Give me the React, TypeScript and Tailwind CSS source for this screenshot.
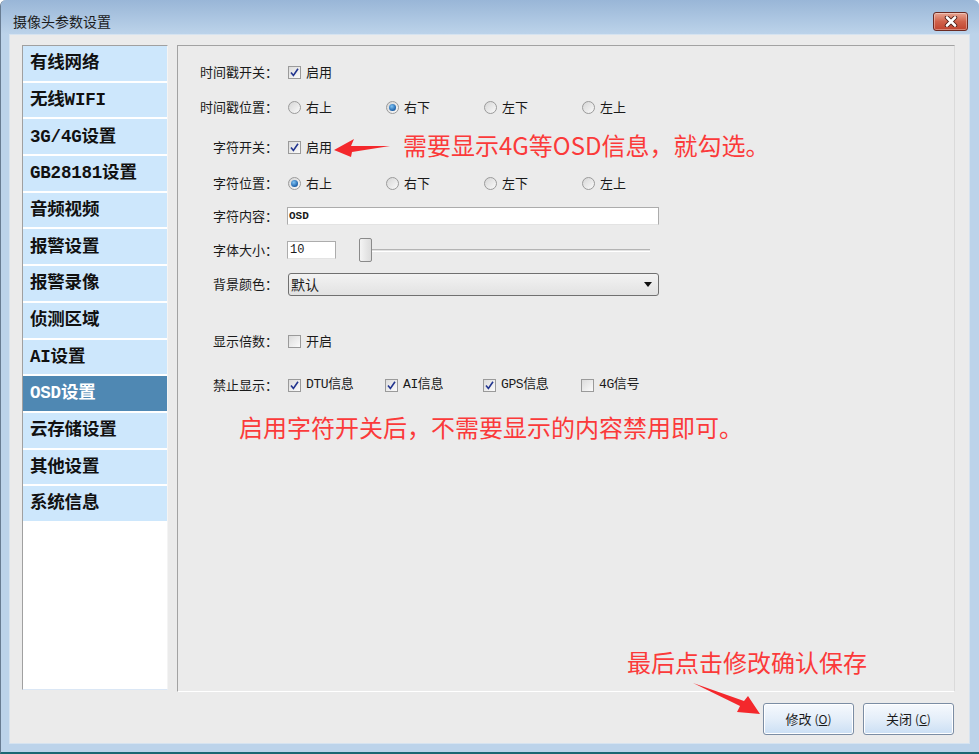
import React from "react";

const NAV = [
  "有线网络",
  "无线WIFI",
  "3G/4G设置",
  "GB28181设置",
  "音频视频",
  "报警设置",
  "报警录像",
  "侦测区域",
  "AI设置",
  "OSD设置",
  "云存储设置",
  "其他设置",
  "系统信息",
];

const POSITIONS = ["右上", "右下", "左下", "左上"];

function Check({ checked, label, mono }: { checked: boolean; label: string; mono?: boolean }) {
  return (
    <div className="flex items-center gap-[5px]">
      <span className="w-[13px] h-[13px] border border-[#9a9a9a] bg-gradient-to-br from-[#dcdcdc] to-[#fbfbfb] flex items-center justify-center">
        {checked && (
          <svg width="9" height="9" viewBox="0 0 9 9">
            <path d="M1 4.5 L3.4 7.5 L8 0.8" fill="none" stroke="#22358f" strokeWidth="1.6" />
          </svg>
        )}
      </span>
      <span
        className={
          mono
            ? "text-[13px] font-['Liberation_Mono','Noto_Sans_CJK_SC',monospace] tracking-[-0.4px]"
            : "text-[13px]"
        }
      >
        {label}
      </span>
    </div>
  );
}

function Radio({ checked, label }: { checked: boolean; label: string }) {
  return (
    <div className="w-[98px] flex items-center gap-[5px]">
      <span className="w-[13px] h-[13px] rounded-full border border-[#9a9a9a] bg-gradient-to-br from-[#d6d6d6] to-[#fafafa] flex items-center justify-center">
        {checked && (
          <span className="w-[7px] h-[7px] rounded-full bg-[radial-gradient(circle_at_40%_35%,#7fc4f5,#1b5fa8_70%,#153b6b)]" />
        )}
      </span>
      <span className="text-[13px]">{label}</span>
    </div>
  );
}

function Row({ label, h, children }: { label: string; h: string; children: React.ReactNode }) {
  return (
    <div className={`flex items-center ${h}`}>
      <div className="w-[100px] text-right text-[13px] text-[#1a1a1a]">{label}</div>
      <div className="ml-[10px] flex items-center">{children}</div>
    </div>
  );
}

function Button({ text, hot }: { text: string; hot: string }) {
  return (
    <button className="w-[91px] h-[32px] rounded-[3px] border border-[#7b8da4] bg-gradient-to-b from-[#f6f9fd] via-[#e4eef9] to-[#cbdff4] text-[13px] text-[#1a1a1a] shadow-[inset_0_0_0_1px_#ffffff]">
      {text}
      <span className="ml-[3px] text-[12px]">
        (<span className="underline">{hot}</span>)
      </span>
    </button>
  );
}

export default function App() {
  return (
    <div className="relative w-[979px] h-[754px] overflow-hidden flex flex-col bg-[#bcd3ea] border-l border-l-[#687c92] border-b-2 border-b-[#1b6773] rounded-t-[6px] font-['Noto_Sans_CJK_SC',sans-serif] text-[#1a1a1a]">
      {/* title bar */}
      <div className="h-[34px] shrink-0 flex items-center justify-between pt-[8px] pl-[12px] pr-[11px] bg-gradient-to-b from-[#99b6d7] to-[#bcd3ea]">
        <span className="text-[14px] text-[#1c1c1c]">摄像头参数设置</span>
        <div className="w-[35px] h-[19px] rounded-[3px] border border-[#6b2a22] bg-gradient-to-b from-[#e7a593] via-[#d0624b] to-[#c0432e] flex items-center justify-center shadow-[inset_0_0_0_1px_rgba(255,255,255,0.35)]">
          <svg width="14" height="11" viewBox="0 0 14 11">
            <path d="M3 1.5 L11 9.5 M11 1.5 L3 9.5" stroke="#4a1a14" strokeWidth="4.4" strokeLinecap="round" />
            <path d="M3 1.5 L11 9.5 M11 1.5 L3 9.5" stroke="#ffffff" strokeWidth="2.6" strokeLinecap="round" />
          </svg>
        </div>
      </div>

      {/* client area */}
      <div className="ml-[8px] mr-[9px] mb-[8px] flex-1 bg-[#ebebeb] border border-[#d6e3f0] flex flex-col pt-[10px] pl-[12px]">
        <div className="flex gap-[9px]">
          {/* nav list */}
          <div className="w-[146px] h-[645px] border border-[#a0a0a0] border-r-[#f4f4f4] border-b-[#dbe7f5] bg-white flex flex-col">
            {NAV.map((n) => (
              <div
                key={n}
                className={`h-[36.7px] shrink-0 border-b-2 border-white flex items-center pl-[7px] text-[17.5px] font-bold font-['Liberation_Mono','Noto_Sans_CJK_SC',monospace] tracking-[-0.2px] ${
                  n === "OSD设置" ? "bg-[#4f88b3] text-white" : "bg-[#cde7fc] text-[#111]"
                }`}
              >
                {n}
              </div>
            ))}
          </div>

          {/* settings panel */}
          <div className="w-[778px] h-[647px] border border-[#a2a2a2] border-r-[#dadada] border-b-white flex flex-col pt-[8px]">
            <Row label="时间戳开关：" h="h-[36px]">
              <Check checked label="启用" />
            </Row>
            <Row label="时间戳位置：" h="h-[34px]">
              {POSITIONS.map((p, i) => (
                <Radio key={p} checked={i === 1} label={p} />
              ))}
            </Row>
            <Row label="字符开关：" h="h-[46px]">
              <Check checked label="启用" />
              <svg width="56" height="20" viewBox="0 0 56 20" className="ml-[2px] mt-[2px]">
                <polygon points="0,12 20,1 17,8 56,8 18,14 17,19" fill="#f4282c" />
              </svg>
              <span className="ml-[13px] -mt-[4px] text-[24px] leading-[30px] text-[#fb3a3a] whitespace-nowrap">
                需要显示4G等OSD信息，就勾选。
              </span>
            </Row>
            <Row label="字符位置：" h="h-[26px]">
              {POSITIONS.map((p, i) => (
                <Radio key={p} checked={i === 0} label={p} />
              ))}
            </Row>
            <Row label="字符内容：" h="h-[40px]">
              <div className="-ml-[1px] w-[372px] h-[18px] bg-white border border-[#acacac] border-b-[#e3e3e3] flex items-center pl-[1px] text-[11px] font-['Liberation_Mono',monospace] font-bold">
                OSD
              </div>
            </Row>
            <Row label="字体大小：" h="h-[28px]">
              <div className="-ml-[1px] w-[49px] h-[18px] bg-white border border-[#acacac] border-b-[#e3e3e3] flex items-center pl-[2px] text-[12px] font-['Liberation_Mono',monospace]">
                10
              </div>
              <div className="relative ml-[23px] w-[291px] h-[24px] flex items-center">
                <div className="w-full h-[3px] border-t border-[#b4b4b4] border-b border-b-white bg-[#e2e2e2]" />
                <div className="absolute left-0 top-0 w-[13px] h-[24px] rounded-[2px] border border-[#8a8a8a] bg-gradient-to-r from-[#f4f4f4] to-[#dcdcdc]" />
              </div>
            </Row>
            <Row label="背景颜色：" h="h-[40px]">
              <div className="w-[371px] h-[23px] rounded-[3px] border border-[#707070] bg-gradient-to-b from-[#f3f3f3] to-[#e2e2e2] flex items-center justify-between pl-[2px] pr-[6px]">
                <span className="text-[14px] leading-none">默认</span>
                <svg width="8" height="5" viewBox="0 0 8 5">
                  <polygon points="0,0 8,0 4,5" fill="#111" />
                </svg>
              </div>
            </Row>
            <Row label="显示倍数：" h="h-[74px]">
              <Check checked={false} label="开启" />
            </Row>
            <Row label="禁止显示：" h="h-[14px]">
              <div className="w-[97px]">
                <Check checked mono label="DTU信息" />
              </div>
              <div className="w-[98px]">
                <Check checked mono label="AI信息" />
              </div>
              <div className="w-[98px]">
                <Check checked mono label="GPS信息" />
              </div>
              <Check checked={false} mono label="4G信号" />
            </Row>
            <div className="mt-[19px] pl-[61px] text-[24px] leading-[32px] text-[#fb3a3a] whitespace-nowrap">
              启用字符开关后，不需要显示的内容禁用即可。
            </div>
          </div>
        </div>

        {/* buttons */}
        <div className="mt-[11px] flex justify-end gap-[9px] pr-[15px]">
          <Button text="修改" hot="O" />
          <Button text="关闭" hot="C" />
        </div>
      </div>

      {/* annotation overlay */}
      <div className="absolute left-[626px] top-[646px] text-[24px] leading-[32px] text-[#fb3a3a] whitespace-nowrap">
        最后点击修改确认保存
      </div>
      <svg width="76" height="40" viewBox="0 0 76 40" className="absolute left-[688px] top-[678px]">
        <polygon points="4,5 55,23 59,18 71,36 48,34 51,28" fill="#f4282c" />
      </svg>
    </div>
  );
}
